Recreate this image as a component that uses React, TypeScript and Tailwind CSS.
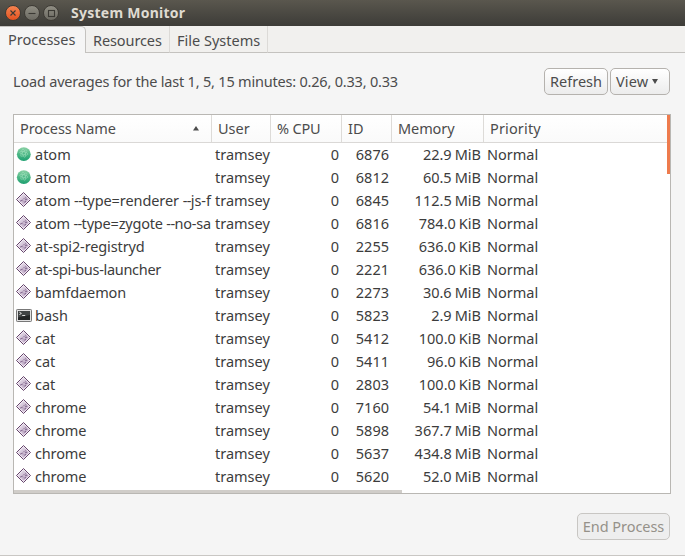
import React from "react";

type Kind = "atom" | "gear" | "term";

interface Proc {
  kind: Kind;
  name: string;
  id: string;
  memory: string;
  unit: string;
  tracking?: string;
}

const rows: Proc[] = [
  { kind: "atom", name: "atom", id: "6876", memory: "22.9", unit: "MiB" },
  { kind: "atom", name: "atom", id: "6812", memory: "60.5", unit: "MiB" },
  { kind: "gear", name: "atom --type=renderer --js-f", id: "6845", memory: "112.5", unit: "MiB", tracking: "tracking-[-0.08px]" },
  { kind: "gear", name: "atom --type=zygote --no-sa", id: "6816", memory: "784.0", unit: "KiB", tracking: "tracking-[-0.2px]" },
  { kind: "gear", name: "at-spi2-registryd", id: "2255", memory: "636.0", unit: "KiB", tracking: "tracking-[-0.12px]" },
  { kind: "gear", name: "at-spi-bus-launcher", id: "2221", memory: "636.0", unit: "KiB", tracking: "tracking-[-0.3px]" },
  { kind: "gear", name: "bamfdaemon", id: "2273", memory: "30.6", unit: "MiB", tracking: "tracking-[-0.1px]" },
  { kind: "term", name: "bash", id: "5823", memory: "2.9", unit: "MiB" },
  { kind: "gear", name: "cat", id: "5412", memory: "100.0", unit: "KiB" },
  { kind: "gear", name: "cat", id: "5411", memory: "96.0", unit: "KiB" },
  { kind: "gear", name: "cat", id: "2803", memory: "100.0", unit: "KiB" },
  { kind: "gear", name: "chrome", id: "7160", memory: "54.1", unit: "MiB", tracking: "tracking-[-0.15px]" },
  { kind: "gear", name: "chrome", id: "5898", memory: "367.7", unit: "MiB", tracking: "tracking-[-0.15px]" },
  { kind: "gear", name: "chrome", id: "5637", memory: "434.8", unit: "MiB", tracking: "tracking-[-0.15px]" },
  { kind: "gear", name: "chrome", id: "5620", memory: "52.0", unit: "MiB", tracking: "tracking-[-0.15px]" },
];

const columns = "grid grid-cols-[198px_59px_71px_50px_92px_1fr]";

function ProcessIcon({ kind }: { kind: Kind }) {
  if (kind === "atom") {
    return (
      <svg width="16" height="16" viewBox="0 0 16 16" className="shrink-0">
        <defs>
          <linearGradient id="atomFill" x1="0" y1="0" x2="0" y2="1">
            <stop offset="0" stopColor="#8ad0a4" />
            <stop offset="0.5" stopColor="#4db886" />
            <stop offset="1" stopColor="#1d9f70" />
          </linearGradient>
        </defs>
        <circle cx="7.8" cy="8.2" r="6.9" fill="url(#atomFill)" />
        <g fill="none" stroke="#a5e2c0" strokeWidth="0.6" opacity="0.8">
          <ellipse cx="7.8" cy="7.2" rx="4.2" ry="1.5" transform="rotate(15 7.8 7.2)" />
          <ellipse cx="7.8" cy="7.2" rx="4.2" ry="1.5" transform="rotate(75 7.8 7.2)" />
          <ellipse cx="7.8" cy="7.2" rx="4.2" ry="1.5" transform="rotate(135 7.8 7.2)" />
        </g>
      </svg>
    );
  }
  if (kind === "term") {
    return (
      <svg width="16" height="16" viewBox="0 0 16 16" className="shrink-0">
        <rect x="0.5" y="2.5" width="15" height="12" rx="0.8" fill="#e3e3e3" stroke="#777777" />
        <rect x="2" y="4" width="12" height="9" fill="#232626" />
        <path d="M2 4h12v4L2 10.5z" fill="#414545" />
        <path d="M3.4 5.2l2 1.2-2 1.2M6.2 8.5h3" fill="none" stroke="#f2f2f2" strokeWidth="0.9" />
      </svg>
    );
  }
  return (
    <svg width="16" height="16" viewBox="0 0 16 16" className="shrink-0">
      <defs>
        <linearGradient id="gearFill" x1="0" y1="0" x2="1" y2="1">
          <stop offset="0" stopColor="#e9e1ec" />
          <stop offset="1" stopColor="#b59cbd" />
        </linearGradient>
      </defs>
      <path d="M7.5 0.5L14.5 7.5L7.5 14.5L0.5 7.5Z" fill="#f1e9f3" stroke="#65456b" strokeWidth="1" />
      <path d="M7.5 2.2L12.8 7.5L7.5 12.8L2.2 7.5Z" fill="url(#gearFill)" />
      <path d="M4.2 9.2L6.4 8.2L7.3 9.4M7.4 7.2L9.2 6.2L10.2 4.8M9.2 7.8L11.2 6.9M8.4 10.4L10 9.2" fill="none" stroke="#84688f" strokeWidth="1.1" />
      <path d="M5.3 10.2L10 5.4" fill="none" stroke="#f0e8f2" strokeWidth="0.6" />
    </svg>
  );
}

function WindowButton({ close, children }: { close?: boolean; children: React.ReactNode }) {
  return (
    <span
      className={
        close
          ? "flex size-[16px] items-center justify-center rounded-full border border-[#3f3c36] bg-linear-to-b from-[#f5834f] to-[#e3521f]"
          : "flex size-[16px] items-center justify-center rounded-full border border-[#3f3c36] bg-linear-to-b from-[#908e84] to-[#6c6a62]"
      }
    >
      <svg width="14" height="14" viewBox="0 0 14 14" fill="none" stroke="#3b3934" strokeWidth="1.1" className="shrink-0">
        {children}
      </svg>
    </span>
  );
}

export default function App() {
  return (
    <div className="flex h-[556px] w-[685px] flex-col overflow-hidden border-b border-[#c9c7c4] bg-[#f5f5f5] font-['Noto_Sans',sans-serif] text-[14.5px] leading-[22px] whitespace-nowrap text-[#4c4c4c]">
      <header className="flex h-[26px] shrink-0 items-center bg-linear-to-b from-[#5a574e] to-[#3d3c38] pl-[5px]">
        <div className="flex gap-[3px]">
          <WindowButton close><path d="M4.5 4.5l5 5M9.5 4.5l-5 5" /></WindowButton>
          <WindowButton><path d="M3.5 7.5h7" /></WindowButton>
          <WindowButton><rect x="4.5" y="4.5" width="6" height="6" /></WindowButton>
        </div>
        <h1 className="ml-[12px] text-[14px] font-bold tracking-[0.25px] text-[#dfdbd2]">System Monitor</h1>
      </header>

      <nav className="flex h-[27px] shrink-0 bg-[#f1f0ee]">
        <div className="w-[86px] rounded-tr-[5px] border-t border-r border-[#c4c2bf] bg-[#f5f5f5] pt-px pl-[8px]">Processes</div>
        <div className="w-[84px] border-r border-b border-[#c4c2bf] border-r-[#dcdad7] pt-[3px] pl-[7px] tracking-[-0.1px]">Resources</div>
        <div className="w-[98px] border-r border-b border-[#c4c2bf] border-r-[#dcdad7] pt-[3px] pl-[7px]">File Systems</div>
        <div className="flex-1 rounded-tr-[3px] border-b border-[#c4c2bf]" />
      </nav>

      <main className="flex flex-1 flex-col pr-[14px] pl-[13px]">
        <div className="flex h-[61px] items-center">
          <p className="flex-1 pb-[5px] tracking-[-0.2px]">Load averages for the last 1, 5, 15 minutes: 0.26, 0.33, 0.33</p>
          <div className="mt-[-5px] mr-px flex gap-[2px]">
            <button className="h-[27px] w-[64px] rounded-[5px] border border-[#b5b2ae] bg-linear-to-b from-white to-[#ececec] leading-[24px]">Refresh</button>
            <button className="flex h-[27px] w-[60px] items-center rounded-[5px] border border-[#b5b2ae] bg-linear-to-b from-white to-[#ececec] pl-[5px] tracking-[0.1px]">
              View
              <svg width="6" height="5" viewBox="0 0 6 5" className="mt-px ml-[4px]"><path d="M0 0h6L3 5z" fill="#4c4c4c" /></svg>
            </button>
          </div>
        </div>

        <section className="relative h-[380px] overflow-hidden border border-[#b9b7b3] bg-white text-[#3c3c3c]">
          <div className={`${columns} h-[28px] border-b border-[#dad8d6] bg-linear-to-b from-white to-[#fafafa] text-[#4c4c4c] [&>div]:pt-[2px] [&>div]:pl-[6px] [&>div:not(:last-child)]:border-r [&>div]:border-[#dddbd8]`}>
            <div className="flex justify-between pr-[12px] tracking-[-0.1px]">
              Process Name
              <svg width="6" height="5" viewBox="0 0 6 5" className="mt-[9px]"><path d="M0 4.5h6L3 0z" fill="#4c4c4c" /></svg>
            </div>
            <div>User</div>
            <div className="tracking-[-0.2px]">% CPU</div>
            <div>ID</div>
            <div className="tracking-[-0.1px]">Memory</div>
            <div className="tracking-[0.15px]">Priority</div>
          </div>
          {rows.map((row) => (
            <div key={row.id} className={`${columns} h-[23px]`}>
              <div className="flex items-start gap-[3px] overflow-hidden pl-[2px]">
                <span className="pt-[3px]"><ProcessIcon kind={row.kind} /></span>
                <span className={row.tracking}>
                  {row.name.split("--").map((part, i) => (
                    <React.Fragment key={i}>
                      {i > 0 && <span className="tracking-[-0.6px]">--</span>}
                      {part}
                    </React.Fragment>
                  ))}
                </span>
              </div>
              <div className="overflow-hidden pl-[3px]">tramsey</div>
              <div className="pr-[3px] text-right">0</div>
              <div className="pr-[3px] text-right">{row.id}</div>
              <div className="flex justify-end gap-[3px] pr-[3px]"><span>{row.memory}</span><span>{row.unit}</span></div>
              <div className="pl-[3px]">Normal</div>
            </div>
          ))}
          <div className="absolute top-0 right-0 h-[59px] w-[3px] bg-[#ee7b4d]" />
          <div className="absolute -bottom-px -left-px h-[4px] w-[389px] bg-[#d0cdc9]" />
        </section>

        <div className="mt-[19px] mr-px flex justify-end">
          <button className="h-[27px] w-[93px] rounded-[5px] border border-[#c8c6c3] bg-[#eeeeee] pb-[2px] leading-[25px] tracking-[-0.05px] text-[#959189]">End Process</button>
        </div>
      </main>
    </div>
  );
}
